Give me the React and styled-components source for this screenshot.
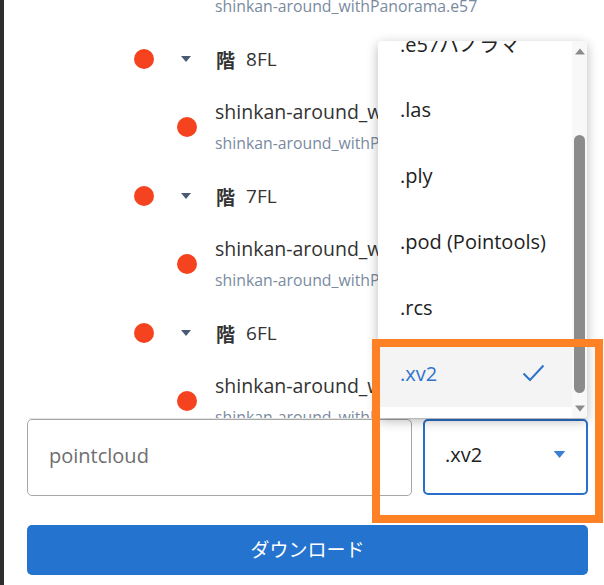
import React, { useRef, useLayoutEffect } from 'react';
import styled, { createGlobalStyle } from 'styled-components';

const GlobalStyle = createGlobalStyle`
  html, body {
    margin: 0;
    padding: 0;
    background: #ffffff;
    font-family: "Open Sans", "Noto Sans", "Noto Sans CJK JP", sans-serif;
  }
  * { box-sizing: border-box; }
`;

const Page = styled.div`
  position: relative;
  height: 585px;
  border-left: 4px solid #2d2d2d;
  background: #ffffff;
  display: flex;
  flex-direction: column;
  overflow: hidden;
`;

const TreeArea = styled.div`
  height: 418px;
  margin: 0 16px 0 23px;
  overflow: hidden;
  box-shadow: 0 2px 2px -2px rgba(0, 0, 0, 0.35);
`;

const FolderRow = styled.div`
  display: flex;
  align-items: center;
  height: 50px;
  padding-left: 107px;
  color: #333;
  font-size: 19px;
`;

const Dot = styled.span`
  flex: none;
  width: 20px;
  height: 20px;
  border-radius: 50%;
  background: #f5431f;
`;

const Caret = styled.svg`
  flex: none;
  margin: 0 25px 0 27px;
`;

const Kanji = styled.span`
  font-weight: 700;
  font-family: "Noto Sans CJK JP", sans-serif;
  margin-right: 11px;
`;

const FileRow = styled.div`
  display: flex;
  align-items: center;
  height: 87px;
  padding: 16px 0 18px 150px;
  gap: 18px;
  white-space: nowrap;
`;

const FileText = styled.div`
  display: flex;
  flex-direction: column;
  gap: 9px;
`;

const FileName = styled.div`
  font-size: 19.5px;
  line-height: 24px;
  color: #333;
`;

const FileSub = styled.div`
  font-size: 15.8px;
  line-height: 20px;
  color: #7a8aa1;
`;

const Controls = styled.div`
  display: flex;
  align-items: flex-start;
  gap: 11px;
  margin: 1px 16px 0 23px;
`;

const NameInput = styled.div`
  width: 385px;
  height: 77px;
  border: 1px solid #a6a6a6;
  border-radius: 5px;
  padding: 0 0 4px 21px;
  display: flex;
  align-items: center;
  font-size: 20px;
  color: #6e6e6e;
`;

const SelectBox = styled.div`
  flex: 1;
  height: 76px;
  border: 2px solid #2a6fc9;
  border-radius: 5px;
  padding: 0 20px 5px 20px;
  display: flex;
  align-items: center;
  justify-content: space-between;
  font-size: 20px;
  color: #222;
`;

const DownloadButton = styled.button`
  margin: 29px 16px 0 23px;
  height: 50px;
  padding: 0 0 4px;
  border: none;
  border-radius: 5px;
  background: #2473cf;
  color: #ffffff;
  font-family: "Noto Sans CJK JP", sans-serif;
  font-size: 19px;
`;

const Menu = styled.div`
  position: absolute;
  left: 374px;
  top: 41px;
  width: 209px;
  height: 377px;
  background: #ffffff;
  border-radius: 4px;
  box-shadow: 0 3px 12px rgba(0, 0, 0, 0.28);
  display: flex;
  overflow: hidden;
`;

const MenuList = styled.div`
  flex: 1;
  overflow: hidden;
  padding: 8px 0 11px;
`;

const MenuItem = styled.div`
  height: 66px;
  display: flex;
  align-items: center;
  justify-content: space-between;
  padding: 0 27px 2px 22px;
  font-size: 20px;
  white-space: nowrap;
  color: ${p => (p.$selected ? '#2f73cc' : '#222')};
  background: ${p => (p.$selected ? '#f4f4f4' : 'transparent')};
`;

const ScrollTrack = styled.div`
  width: 15px;
  background: #f8f8f8;
  display: flex;
  flex-direction: column;
  align-items: center;
  padding: 7px 0 6px;
`;

const Thumb = styled.div`
  width: 11px;
  height: 258px;
  margin-top: 80px;
  border-radius: 6px;
  background: #8b8b8b;
`;

const Highlight = styled.div`
  position: absolute;
  left: 368px;
  top: 339px;
  width: 231px;
  height: 184px;
  border: 8px solid #fe8126;
  pointer-events: none;
`;

const groups = ['9FL', '8FL', '7FL', '6FL'];
const formats = ['.e57パノラマ', '.las', '.ply', '.pod (Pointools)', '.rcs', '.xv2'];

const Tri = ({ color, w = 10, h = 6, up }) => (
  <svg width={w} height={h} viewBox="0 0 10 6" style={{ display: 'block' }}>
    <path d={up ? 'M0 6 L5 0 L10 6 Z' : 'M0 0 L10 0 L5 6 Z'} fill={color} />
  </svg>
);

const App = () => {
  const treeRef = useRef(null);
  const menuRef = useRef(null);

  useLayoutEffect(() => {
    if (treeRef.current) treeRef.current.scrollTop = 103;
    if (menuRef.current) menuRef.current.scrollTop = 38;
  }, []);

  return (
    <>
      <GlobalStyle />
      <Page>
        <TreeArea ref={treeRef}>
          {groups.map(g => (
            <div key={g}>
              <FolderRow>
                <Dot />
                <Caret width="10" height="6" viewBox="0 0 10 6">
                  <path d="M0 0 L10 0 L5 6 Z" fill="#4a5a72" />
                </Caret>
                <Kanji>階</Kanji>
                {g}
              </FolderRow>
              <FileRow>
                <Dot />
                <FileText>
                  <FileName>shinkan-around_withPanorama</FileName>
                  <FileSub>shinkan-around_withPanorama.e57</FileSub>
                </FileText>
              </FileRow>
            </div>
          ))}
        </TreeArea>

        <Controls>
          <NameInput>pointcloud</NameInput>
          <SelectBox>
            .xv2
            <Tri color="#3b7fd3" w={13} h={7} />
          </SelectBox>
        </Controls>

        <DownloadButton>ダウンロード</DownloadButton>

        <Menu>
          <MenuList ref={menuRef}>
            {formats.map(f => (
              <MenuItem key={f} $selected={f === '.xv2'}>
                {f}
                {f === '.xv2' && (
                  <svg width="23" height="18" viewBox="0 0 23 18">
                    <path d="M1.5 9.5 L8 16 L21.5 1.5" fill="none" stroke="#2f73cc" strokeWidth="2" />
                  </svg>
                )}
              </MenuItem>
            ))}
          </MenuList>
          <ScrollTrack>
            <Tri color="#8b8b8b" w={10} h={7} up />
            <Thumb />
            <div style={{ marginTop: 'auto' }}>
              <Tri color="#8b8b8b" w={10} h={7} />
            </div>
          </ScrollTrack>
        </Menu>

        <Highlight />
      </Page>
    </>
  );
};

export default App;
